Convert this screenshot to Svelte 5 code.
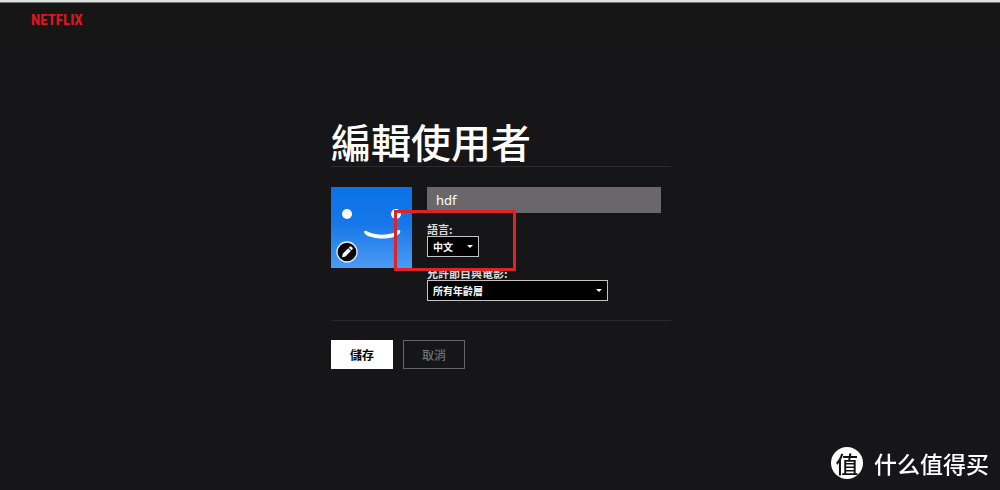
<script lang="ts">
	let name = $state('hdf');
	let language = $state('zh');
	let maturity = $state('all');
</script>

<div class="page">
	<header class="header">
		<a class="logo" href="#home">NETFLIX</a>
	</header>

	<main class="profile">
		<h1>編輯使用者</h1>

		<form class="entry" onsubmit={(e) => e.preventDefault()}>
			<div class="details">
				<div class="avatar">
					<svg class="face" viewBox="0 0 81 81" aria-hidden="true">
						<defs>
							<linearGradient id="sky" x1="0" y1="0" x2="0" y2="1">
								<stop offset="0" stop-color="#0b72e7" />
								<stop offset="0.45" stop-color="#1677e8" />
								<stop offset="1" stop-color="#4c9bf3" />
							</linearGradient>
						</defs>
						<rect width="81" height="81" fill="url(#sky)" />
						<circle cx="16" cy="27" r="5" fill="#fff" />
						<circle cx="65" cy="27" r="5" fill="#fff" />
						<path
							d="M33.5 44 C34.5 43.2 36 44.5 38 45.3 C45 48.4 57 48.4 63.5 45.6 C66 44.8 66 43 68 43 C70 43.2 69.5 45.5 68 47 C62 53 43 53 35 47.8 C33 46 32.5 45 33.5 44 Z"
							fill="#fff"
						/>
					</svg>
					<button class="edit" type="button" aria-label="編輯">
						<svg viewBox="0 0 22 22" aria-hidden="true">
							<circle cx="11" cy="11" r="10" fill="#05070c" stroke="#e9edf2" stroke-width="1.3" />
							<path d="M6 16.2 L6.8 12.7 L12.2 7.3 L14.9 10 L9.5 15.4 Z" fill="#fff" />
							<path d="M12.9 6.7 L14 5.6 Q14.7 5 15.4 5.7 L16.5 6.8 Q17.1 7.5 16.5 8.2 L15.4 9.3 Z" fill="#fff" />
						</svg>
					</button>
				</div>

				<div class="fields">
					<input class="name" type="text" aria-label="名稱" bind:value={name} />

					<label for="language">語言:</label>
					<div class="dropdown short">
						<select id="language" bind:value={language}>
							<option value="zh">中文</option>
							<option value="en">English</option>
						</select>
					</div>

					<label for="maturity">允許節目與電影:</label>
					<div class="dropdown long">
						<select id="maturity" bind:value={maturity}>
							<option value="all">所有年齡層</option>
						</select>
					</div>
				</div>

				<div class="highlight"></div>
			</div>

			<div class="actions">
				<button class="save" type="submit">儲存</button>
				<button class="cancel" type="button">取消</button>
			</div>
		</form>
	</main>

	<div class="watermark">
		<span class="badge">值</span>
		<span>什么值得买</span>
	</div>
</div>

<style>
	:global(body) {
		background: #161517;
	}

	.page {
		min-height: 100vh;
		box-sizing: border-box;
		border-top: 2px solid #dde3e1;
		background: linear-gradient(#151714, #161517 48px);
		color: #fff;
		font-family: 'Liberation Sans', 'Noto Sans CJK TC', sans-serif;
	}

	.header {
		display: flex;
		align-items: center;
		height: 34px;
		box-sizing: border-box;
		padding: 0 31px;
		border-top: 1px solid #6f7371;
	}

	.logo {
		color: #e01520;
		font-family: 'Liberation Sans Narrow', 'Roboto Condensed', sans-serif;
		font-size: 15px;
		font-weight: 700;
		line-height: 20px;
		text-decoration: none;
	}

	.profile {
		width: 340px;
		max-width: 100%;
		margin: 0 auto;
		padding: 83px 0 0 2px;
	}

	h1 {
		margin: 0;
		font-family: 'Noto Sans CJK TC', sans-serif;
		font-size: 40px;
		font-weight: 500;
		line-height: 44px;
		padding-bottom: 3px;
	}

	.details {
		position: relative;
		display: flex;
		gap: 15px;
		padding: 20px 0 19px;
		border: solid #2b2a2c;
		border-width: 1px 0;
	}

	.avatar {
		position: relative;
		flex: none;
		width: 81px;
		height: 81px;
	}

	.face,
	.edit svg {
		display: block;
		width: 100%;
		height: 100%;
	}

	.edit {
		position: absolute;
		left: 5px;
		bottom: 5px;
		width: 22px;
		height: 22px;
		padding: 0;
		border: 0;
		border-radius: 50%;
		background: none;
		cursor: pointer;
	}

	.fields {
		flex: 1;
		padding-right: 10px;
	}

	.name {
		display: block;
		width: 100%;
		height: 26px;
		box-sizing: border-box;
		margin-bottom: 10px;
		padding: 0 9px;
		border: 0;
		background: #69676a;
		color: #fff;
		font-family: 'Noto Sans', sans-serif;
		font-size: 13px;
	}

	label {
		display: block;
		color: #dddbdd;
		font-family: 'Noto Sans CJK TC', sans-serif;
		font-size: 11px;
		font-weight: 700;
		line-height: 13px;
	}

	.dropdown {
		position: relative;
	}

	.dropdown::after {
		content: '';
		position: absolute;
		top: 9px;
		right: 6px;
		border: 3px solid transparent;
		border-top-color: #fff;
		border-bottom: 0;
		pointer-events: none;
	}

	.short {
		width: 52px;
		margin-bottom: 10px;
	}

	.long {
		width: 181px;
	}

	select {
		display: block;
		appearance: none;
		width: 100%;
		height: 21px;
		box-sizing: border-box;
		padding: 0 5px;
		border: 1px solid #c4c2c4;
		border-radius: 0;
		background: #000;
		color: #fff;
		font-family: 'Noto Sans CJK TC', sans-serif;
		font-size: 10px;
		font-weight: 700;
	}

	.highlight {
		position: absolute;
		top: 43px;
		left: 63px;
		width: 122px;
		height: 61px;
		box-sizing: border-box;
		border: 3px solid #e02227;
		pointer-events: none;
	}

	.actions {
		display: flex;
		gap: 10px;
		padding-top: 19px;
	}

	.actions button {
		width: 62px;
		height: 29px;
		padding: 0;
		border: 1px solid #67656a;
		background: transparent;
		color: #747276;
		font-family: 'Noto Sans CJK TC', sans-serif;
		font-size: 12px;
		font-weight: 500;
		cursor: pointer;
	}

	.actions .save {
		border-color: #fff;
		background: #fff;
		color: #000;
		font-weight: 700;
	}

	.watermark {
		position: fixed;
		right: 11px;
		bottom: 11px;
		display: flex;
		align-items: center;
		gap: 11px;
		font-family: 'Noto Sans CJK SC', sans-serif;
		font-size: 23px;
		font-weight: 500;
		line-height: 32px;
	}

	.badge {
		width: 32px;
		border-radius: 50%;
		background: #fff;
		color: #111;
		text-align: center;
	}
</style>
